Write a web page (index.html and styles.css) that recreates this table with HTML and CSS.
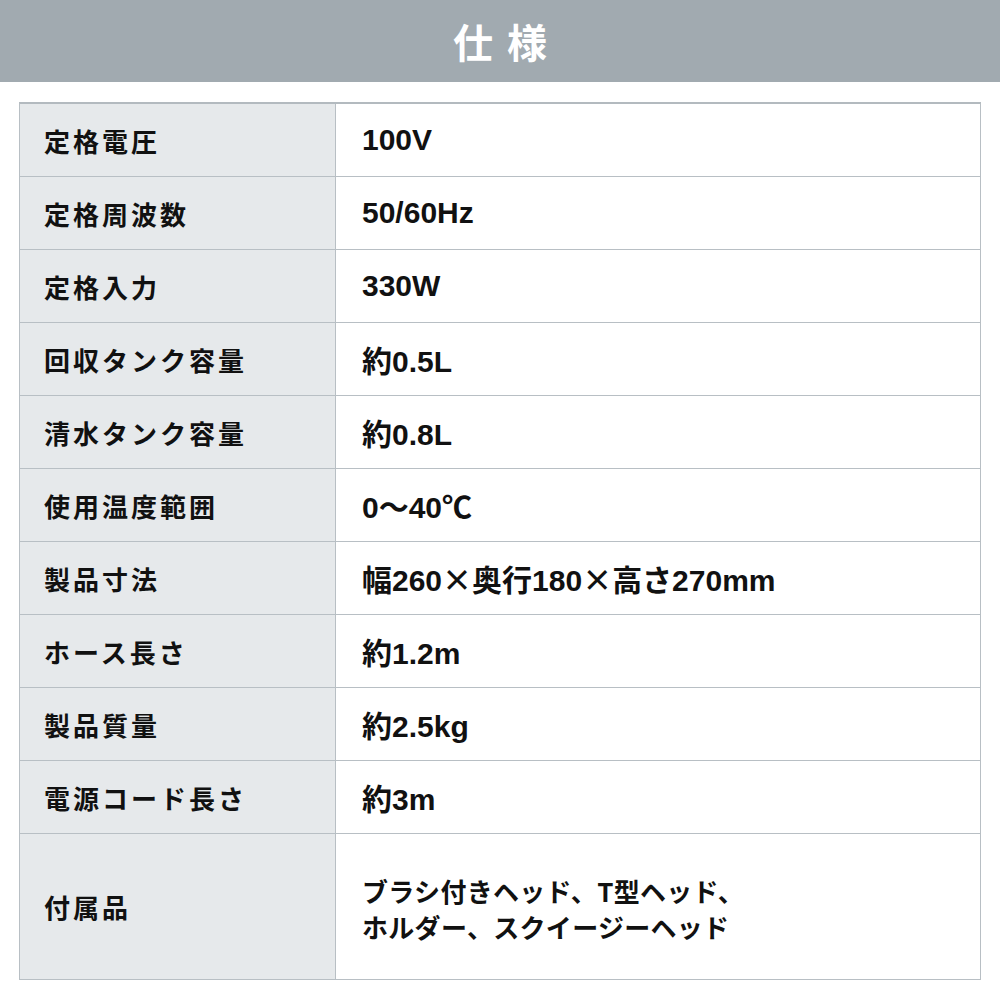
FILE: index.html
```html
<!DOCTYPE html>
<html lang="ja">
<head>
<meta charset="utf-8">
<link rel="stylesheet" href="styles.css">
</head>
<body>
<header class="title-bar"><h1 class="title">仕様</h1></header>
<div class="spec">
  <div class="label">定格電圧</div><div class="value">100V</div>
  <div class="label">定格周波数</div><div class="value">50/60Hz</div>
  <div class="label">定格入力</div><div class="value">330W</div>
  <div class="label">回収タンク容量</div><div class="value">約0.5L</div>
  <div class="label">清水タンク容量</div><div class="value">約0.8L</div>
  <div class="label">使用温度範囲</div><div class="value">0～40℃</div>
  <div class="label">製品寸法</div><div class="value">幅260<span class="times">×</span>奥行180<span class="times">×</span>高さ270mm</div>
  <div class="label">ホース長さ</div><div class="value">約1.2m</div>
  <div class="label">製品質量</div><div class="value">約2.5kg</div>
  <div class="label">電源コード長さ</div><div class="value">約3m</div>
  <div class="label tall">付属品</div><div class="value tall small">ブラシ付きヘッド、T型ヘッド、<br>ホルダー、スクイージーヘッド</div>
</div>
</body>
</html>
```
FILE: styles.css
```css
html, body {
  margin: 0;
  padding: 0;
  background: #ffffff;
}
body {
  font-family: "Liberation Sans", "Noto Sans CJK JP", sans-serif;
  color: #111111;
}
.title-bar {
  height: 82px;
  background: #a1aab0;
  display: flex;
  align-items: center;
  justify-content: center;
}
.title {
  margin: 0;
  font-family: "Noto Sans CJK JP", sans-serif;
  font-weight: 700;
  font-size: 40px;
  letter-spacing: 14px;
  padding-left: 14px;
  color: #ffffff;
  line-height: 1;
}
.spec {
  margin: 20px 0 0 19px;
  width: 960px;
  display: grid;
  grid-template-columns: 316px 1fr;
  border-top: 2px solid #b3babf;
  border-left: 1px solid #b8bfc4;
  border-right: 1px solid #b8bfc4;
}
.label, .value {
  height: 72px;
  border-bottom: 1px solid #b8bfc4;
  display: flex;
  align-items: center;
  font-weight: 700;
  box-sizing: content-box;
}
.label {
  background: #e6e9eb;
  border-right: 1px solid #b8bfc4;
  padding-left: 24px;
  font-family: "Noto Sans CJK JP", sans-serif;
  font-size: 26px;
  letter-spacing: 3px;
}
.value {
  padding-left: 26px;
  font-size: 30px;
}
.times {
  display: inline-block;
  width: 1em;
  text-align: center;
  font-family: "Noto Sans CJK JP", sans-serif;
  font-weight: 700;
}
.tall {
  height: 145px;
}
.value.small {
  font-family: "Noto Sans CJK JP", sans-serif;
  font-size: 26px;
  letter-spacing: 0.3px;
  line-height: 36px;
  padding-top: 4px;
  height: 141px;
}
```
